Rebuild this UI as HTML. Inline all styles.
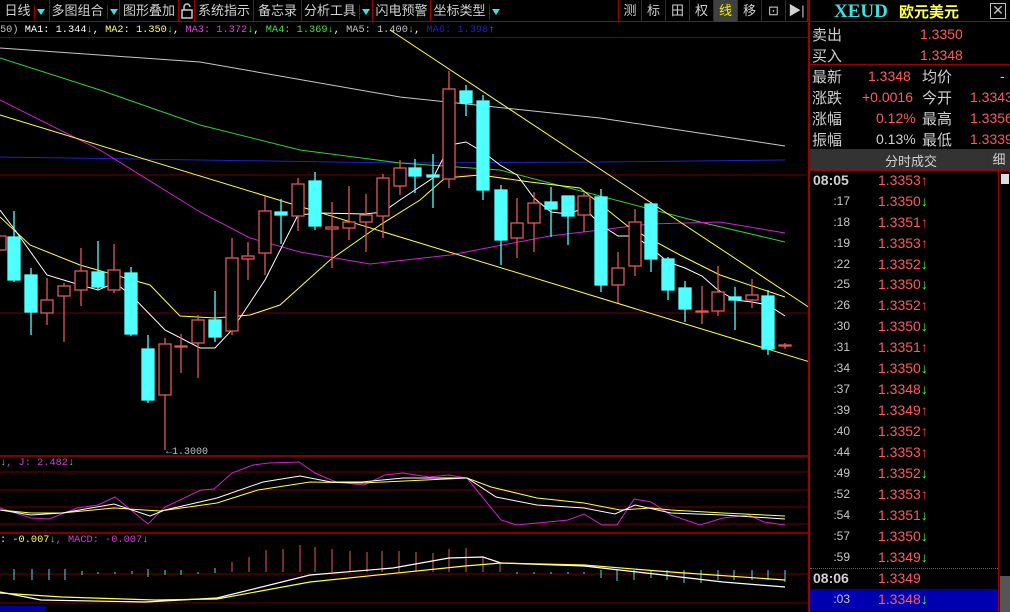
<!DOCTYPE html>
<html><head><meta charset="utf-8"><style>
*{margin:0;padding:0;box-sizing:border-box}
body{width:1010px;height:612px;background:#000;overflow:hidden;position:relative;font-family:"Liberation Sans","Noto Sans CJK SC",sans-serif;color:#c8c8c8}
.tb{position:absolute;top:0;left:0;width:808px;height:22px;border-bottom:1px solid #a00000}
.tb span{position:absolute;top:0;height:22px;line-height:22px;font-size:13px;color:#d0d0d0;border-right:1px solid #a00000;text-align:center}
.tri{display:inline-block;width:11px;height:14px;border-left:1px solid #a00000;vertical-align:middle;margin-left:3px;position:relative}
.tri:after{content:"";position:absolute;left:2px;top:4px;border-left:4px solid transparent;border-right:4px solid transparent;border-top:6px solid #40e0e0}
.leg{position:absolute;font-family:"Liberation Mono",monospace;font-size:10.3px;white-space:nowrap}
.rp{position:absolute;left:808px;top:0;width:202px;height:612px;border-left:2px solid #a00000}
.r{position:absolute;font-size:14px;white-space:nowrap}
.lab{left:2px;font-size:15px;color:#d0d0d0}
.red{color:#ff5a5a}
.tr{position:absolute;left:0;width:188px;height:21px;font-size:14px}
.tr .t{position:absolute;right:148px;top:2px;color:#c8c8c8;font-size:12px}
.tr .tb2{position:absolute;left:3px;top:1px;color:#d0d0d0;font-size:14px;font-weight:bold}
.tr .p{position:absolute;left:68px;top:1px;color:#ff5a5a;font-size:14px}
.up{color:#ff4040}.dn{color:#40ff40}
</style></head><body>
<div class="tb">
<span style="left:0;width:50px">日线<i class="tri"></i></span>
<span style="left:50px;width:70px">多图组合<i class="tri"></i></span>
<span style="left:120px;width:59px">图形叠加</span>
<span style="left:179px;width:16px"><svg width="12" height="16" viewBox="0 0 12 16" style="margin-top:3px"><path d="M3 7V4a3 3 0 0 1 6 0" fill="none" stroke="#ccc" stroke-width="1.5"/><rect x="1" y="7" width="10" height="8" fill="none" stroke="#ccc" stroke-width="1.5"/></svg></span>
<span style="left:195px;width:59px">系统指示</span>
<span style="left:254px;width:48px">备忘录</span>
<span style="left:302px;width:71px">分析工具<i class="tri"></i></span>
<span style="left:373px;width:58px">闪电预警</span>
<span style="left:431px;width:71px;border-right:none">坐标类型<i class="tri"></i></span>
<span style="left:618px;width:24px;border-left:1px solid #a00000">测</span>
<span style="left:642px;width:24px">标</span>
<span style="left:666px;width:24px">田</span>
<span style="left:690px;width:24px">权</span>
<span style="left:714px;width:24px;background:#404040;color:#f0f000">线</span>
<span style="left:738px;width:24px">移</span>
<span style="left:762px;width:24px">⊡</span>
<span style="left:786px;width:22px">▶|</span>
</div>
<div style="position:absolute;left:0;top:37px;width:808px;height:1px;background:#700000"></div>
<div class="leg" style="left:0;top:24px"><span style="color:#c0c0c0">50) </span><span style="color:#fff">MA1: 1.344</span><span class="dn">↓</span><span style="color:#fff">, </span><span style="color:#ffff60">MA2: 1.350</span><span class="dn">↓</span><span style="color:#fff">, </span><span style="color:#e040e0">MA3: 1.372</span><span class="dn">↓</span><span style="color:#fff">, </span><span style="color:#40e040">MA4: 1.369</span><span class="dn">↓</span><span style="color:#fff">, </span><span style="color:#c0c0c0">MA5: 1.400</span><span class="dn">↓</span><span style="color:#fff">, </span><span style="color:#2020c0">MA6: 1.398</span><span class="up">↑</span></div>

<svg style="position:absolute;left:0;top:0" width="808" height="612" viewBox="0 0 808 612">
<g stroke="#700000" stroke-width="1">
<line x1="0" y1="175" x2="808" y2="175"/><line x1="0" y1="313" x2="808" y2="313"/>
<line x1="0" y1="472" x2="808" y2="472"/><line x1="0" y1="490" x2="808" y2="490"/><line x1="0" y1="507" x2="808" y2="507"/><line x1="0" y1="524" x2="808" y2="524"/>
<line x1="0" y1="574" x2="808" y2="574"/><line x1="0" y1="603" x2="808" y2="603"/>
</g>
<line x1="0" y1="456" x2="808" y2="456" stroke="#b00000" stroke-width="1.5"/>
<line x1="0" y1="533" x2="808" y2="533" stroke="#b00000" stroke-width="1.5"/>
<g fill="none" stroke-width="1">
<polyline stroke="#c8c8c8" points="0,48 200,62 400,97 600,118 785,146"/>
<polyline stroke="#2020d0" points="0,157 400,163 600,162 785,160"/>
<polyline stroke="#30d030" points="0,58 100,90 200,125 300,150 400,163 500,170 600,196 700,222 785,242"/>
<polyline stroke="#d020d0" points="0,100 100,150 200,212 250,238 300,252 370,264 450,255 550,236 650,224 720,222 785,233"/>
<polyline stroke="#ffff40" points="0,217 30,245 80,265 150,285 180,316 215,318 250,315 280,305 330,260 380,225 420,200 445,178 480,175 530,182 580,188 630,228 680,255 720,275 770,292 785,297"/>
<line stroke="#ffff40" x1="0" y1="115" x2="810" y2="362"/>
<line stroke="#ffff40" x1="390" y1="30" x2="810" y2="308"/>
<polyline stroke="#ffffff" points="0,210 15,230 47,275 80,285 98,290 115,283 131,295 165,330 200,348 215,348 232,330 265,280 298,215 320,213 365,214 383,212 400,200 433,178 450,145 466,142 483,152 500,165 517,175 534,198 551,212 568,214 584,208 601,225 618,236 635,236 651,248 668,262 685,268 702,276 718,290 735,300 752,302 768,305 785,316"/>
</g>
<g stroke="#e05a5a" fill="#000" stroke-width="1.3">
<path d="M47 278V325M64 283V342M81 248V306M114 244V293M165 338V450M181 334V373M198 315V378M232 238V335M248 242V280M265 196V275M298 178V231M332 202V268M349 186V240M366 194V252M383 174V238M400 160V195M449 71V188M517 198V258M534 192V252M584 193V232M618 252V303M635 209V276M702 286V324M718 266V316M752 279V308M785 343V349" fill="none"/>
<rect x="-4" y="236" width="10" height="14"/>
<rect x="41" y="300" width="12" height="13"/><rect x="58" y="286" width="12" height="10"/><rect x="75" y="271" width="12" height="19"/><rect x="108" y="270" width="12" height="20"/>
<rect x="159" y="344" width="12" height="51"/><rect x="175" y="346" width="12" height="1"/><rect x="192" y="320" width="12" height="23"/><rect x="226" y="258" width="12" height="73"/>
<rect x="242" y="256" width="12" height="3"/><rect x="259" y="211" width="12" height="42"/><rect x="292" y="184" width="12" height="32"/><rect x="326" y="227" width="12" height="2"/>
<rect x="343" y="222" width="12" height="6"/><rect x="360" y="215" width="12" height="7"/><rect x="377" y="178" width="12" height="38"/><rect x="394" y="168" width="12" height="18"/>
<rect x="443" y="89" width="12" height="90"/><rect x="511" y="223" width="12" height="15"/><rect x="528" y="203" width="12" height="20"/><rect x="578" y="196" width="12" height="19"/>
<rect x="612" y="268" width="12" height="17"/><rect x="629" y="222" width="12" height="44"/><rect x="696" y="311" width="12" height="1"/><rect x="712" y="292" width="12" height="19"/>
<rect x="746" y="295" width="12" height="5"/><rect x="779" y="345" width="12" height="1"/>
</g>
<g stroke="#50ffff" fill="#50ffff" stroke-width="1.3">
<path d="M14 211V282M31 268V335M98 241V290M131 267V336M148 335V403M215 291V342M281 199V244M315 172V230M415 159V193M433 154V208M466 85V116M483 95V200M501 185V265M551 187V237M568 196V245M601 189V292M651 202V272M668 257V300M685 281V322M735 287V330M768 290V355"/>
<rect x="8" y="237" width="12" height="43"/><rect x="25" y="275" width="12" height="37"/><rect x="92" y="272" width="12" height="15"/><rect x="125" y="273" width="12" height="61"/>
<rect x="142" y="349" width="12" height="51"/><rect x="209" y="320" width="12" height="17"/><rect x="275" y="212" width="12" height="3"/><rect x="309" y="181" width="12" height="45"/>
<rect x="409" y="168" width="12" height="8"/><rect x="427" y="175" width="12" height="2"/><rect x="460" y="91" width="12" height="12"/><rect x="477" y="101" width="12" height="89"/>
<rect x="495" y="190" width="12" height="50"/><rect x="545" y="202" width="12" height="7"/><rect x="562" y="196" width="12" height="20"/><rect x="595" y="197" width="12" height="88"/>
<rect x="645" y="204" width="12" height="55"/><rect x="662" y="259" width="12" height="31"/><rect x="679" y="288" width="12" height="21"/><rect x="729" y="297" width="12" height="3"/>
<rect x="762" y="296" width="12" height="53"/>
</g>
<text x="166" y="454" font-size="10" fill="#c0c0c0" font-family="Liberation Mono,monospace">←1.3000</text>
<g fill="none" stroke-width="1">
<polyline stroke="#d020d0" points="0,508 31,518 49,519 77,508 98,505 115,497 148,524 165,507 201,490 214,489 232,473 253,465 269,463 299,462 315,473 336,482 364,485 385,475 403,473 429,477 449,475 467,478 501,520 517,525 568,520 584,514 602,525 617,525 634,499 651,502 671,515 700,525 723,518 749,515 764,522 785,525"/>
<polyline stroke="#ffff40" points="0,510 31,513 62,513 114,508 160,511 217,503 258,490 310,482 362,483 467,478 491,487 537,498 584,503 620,510 651,508 671,510 723,513 785,516"/>
<polyline stroke="#ffffff" points="0,510 31,515 62,513 114,504 150,516 165,510 217,498 263,482 300,476 331,482 362,482 403,478 467,478 496,497 537,505 584,508 615,514 635,505 671,513 723,515 785,519"/>
</g>
<g stroke="#e05a5a" stroke-width="1">
<path d="M232 562V572M249 557V572M266 550V572M283 549V572M300 545V572M315 547V572M332 549V572M350 551V572M367 552V572M382 551V572M399 551V572M416 552V572M433 553V572M449 549V572M466 548V572M483 557V572M500 563V572"/>
</g>
<g stroke="#50e0e0" stroke-width="1">
<path d="M14 569V580M32 569V580M49 569V580M65 569V580M82 571V575M98 572V574M115 572V574M132 571V574M148 569V577M165 570V575M181 570V575M198 572V574M215 568V573M517 572V574M534 572V574M551 572V574M568 572V574M584 572V574M601 570V578M617 570V581M634 570V580M651 570V578M667 570V580M684 570V583M701 570V583M718 570V580M734 570V580M752 570V580M768 570V580M785 570V582"/>
</g>
<g fill="none" stroke-width="1.2">
<polyline stroke="#ffffff" points="0,592 41,600 145,602 217,598 310,575 393,568 449,558 483,557 501,563 584,566 646,573 723,582 785,587"/>
<polyline stroke="#ffff40" points="0,593 62,597 155,600 217,599 310,582 465,566 501,563 584,565 671,572 785,580"/>
</g>
<rect x="0" y="606" width="46" height="6" fill="#0000a0"/>
</svg>
<div class="leg" style="left:0;top:457px"><span class="dn">↓</span><span style="color:#d040d0">, J: 2.482</span><span class="dn">↓</span></div>
<div class="leg" style="left:0;top:534px"><span style="color:#ffff60">: -0.007</span><span class="dn">↓</span><span style="color:#d040d0">, MACD: -0.007</span><span class="dn">↓</span></div>

<div class="rp">
<div style="position:absolute;left:0;top:0;width:200px;height:22px;border-bottom:1px solid #a00000">
<span style="position:absolute;left:24px;top:1px;font-family:'Liberation Serif',serif;font-weight:bold;font-size:19px;color:#40e0e0">XEUD</span>
<span style="position:absolute;left:89px;top:1px;font-size:15px;font-weight:bold;color:#ffff50">欧元美元</span>
<span style="position:absolute;left:180px;top:3px;width:16px;height:16px;border:1px solid #c0c0c0;color:#c0c0c0;font-size:14px;line-height:13px;text-align:center">✕</span>
</div>
<span class="r lab" style="top:24px">卖出</span><span class="r red" style="left:110px;top:26px">1.3350</span>
<span class="r lab" style="top:45px">买入</span><span class="r red" style="left:110px;top:47px">1.3348</span>
<div style="position:absolute;left:0;top:64px;width:200px;height:1px;background:#a00000"></div>
<span class="r lab" style="top:66px">最新</span><span class="r red" style="left:58px;top:68px">1.3348</span><span class="r lab" style="left:112px;top:66px">均价</span><span class="r" style="left:190px;top:68px">-</span>
<span class="r lab" style="top:87px">涨跌</span><span class="r red" style="left:52px;top:89px">+0.0016</span><span class="r lab" style="left:112px;top:87px">今开</span><span class="r red" style="left:160px;top:89px">1.3343</span>
<span class="r lab" style="top:108px">涨幅</span><span class="r red" style="left:66px;top:110px">0.12%</span><span class="r lab" style="left:112px;top:108px">最高</span><span class="r red" style="left:160px;top:110px">1.3356</span>
<span class="r lab" style="top:129px">振幅</span><span class="r" style="left:66px;top:131px;color:#d0d0d0">0.13%</span><span class="r lab" style="left:112px;top:129px">最低</span><span class="r red" style="left:160px;top:131px">1.3339</span>
<div style="position:absolute;left:0;top:149px;width:200px;height:22px;background:#333;border-top:1px solid #a00000;border-bottom:1px solid #a00000"></div>
<span class="r" style="left:75px;top:151px;color:#d0d0d0;font-size:13px">分时成交</span>
<span style="position:absolute;left:177px;top:150px;width:23px;height:20px;border-left:1px solid #a00000;color:#d0d0d0;font-size:13px;text-align:center;line-height:20px">细</span>
<div style="position:absolute;left:188px;top:171px;width:1px;height:441px;background:#a00000"></div>
<div style="position:absolute;left:191px;top:174px;width:8px;height:10px;background:#ddd"></div>
<div style="position:absolute;left:190px;top:576px;width:10px;height:36px;background:#555"></div>
<div style="position:absolute;left:0;top:568px;width:188px;border-top:1px dotted #666"></div>
<div style="position:absolute;left:0;top:589px;width:188px;height:22px;background:#0000b0"></div>
<div class="tr" style="top:171px"><span class="tb2">08:05</span><span class="p">1.3353<b class="up">↑</b></span></div>
<div class="tr" style="top:192px"><span class="t">:17</span><span class="p">1.3350<b class="dn">↓</b></span></div>
<div class="tr" style="top:213px"><span class="t">:18</span><span class="p">1.3351<b class="up">↑</b></span></div>
<div class="tr" style="top:234px"><span class="t">:19</span><span class="p">1.3353<b class="up">↑</b></span></div>
<div class="tr" style="top:255px"><span class="t">:22</span><span class="p">1.3352<b class="dn">↓</b></span></div>
<div class="tr" style="top:275px"><span class="t">:25</span><span class="p">1.3350<b class="dn">↓</b></span></div>
<div class="tr" style="top:296px"><span class="t">:26</span><span class="p">1.3352<b class="up">↑</b></span></div>
<div class="tr" style="top:317px"><span class="t">:30</span><span class="p">1.3350<b class="dn">↓</b></span></div>
<div class="tr" style="top:338px"><span class="t">:31</span><span class="p">1.3351<b class="up">↑</b></span></div>
<div class="tr" style="top:359px"><span class="t">:34</span><span class="p">1.3350<b class="dn">↓</b></span></div>
<div class="tr" style="top:380px"><span class="t">:37</span><span class="p">1.3348<b class="dn">↓</b></span></div>
<div class="tr" style="top:401px"><span class="t">:39</span><span class="p">1.3349<b class="up">↑</b></span></div>
<div class="tr" style="top:422px"><span class="t">:40</span><span class="p">1.3352<b class="up">↑</b></span></div>
<div class="tr" style="top:443px"><span class="t">:44</span><span class="p">1.3353<b class="up">↑</b></span></div>
<div class="tr" style="top:464px"><span class="t">:49</span><span class="p">1.3352<b class="dn">↓</b></span></div>
<div class="tr" style="top:485px"><span class="t">:52</span><span class="p">1.3353<b class="up">↑</b></span></div>
<div class="tr" style="top:506px"><span class="t">:54</span><span class="p">1.3351<b class="dn">↓</b></span></div>
<div class="tr" style="top:527px"><span class="t">:57</span><span class="p">1.3350<b class="dn">↓</b></span></div>
<div class="tr" style="top:548px"><span class="t">:59</span><span class="p">1.3349<b class="dn">↓</b></span></div>
<div class="tr" style="top:569px"><span class="tb2">08:06</span><span class="p">1.3349</span></div>
<div class="tr" style="top:590px"><span class="t">:03</span><span class="p">1.3348<b class="dn">↓</b></span></div>
</div>
</body></html>
